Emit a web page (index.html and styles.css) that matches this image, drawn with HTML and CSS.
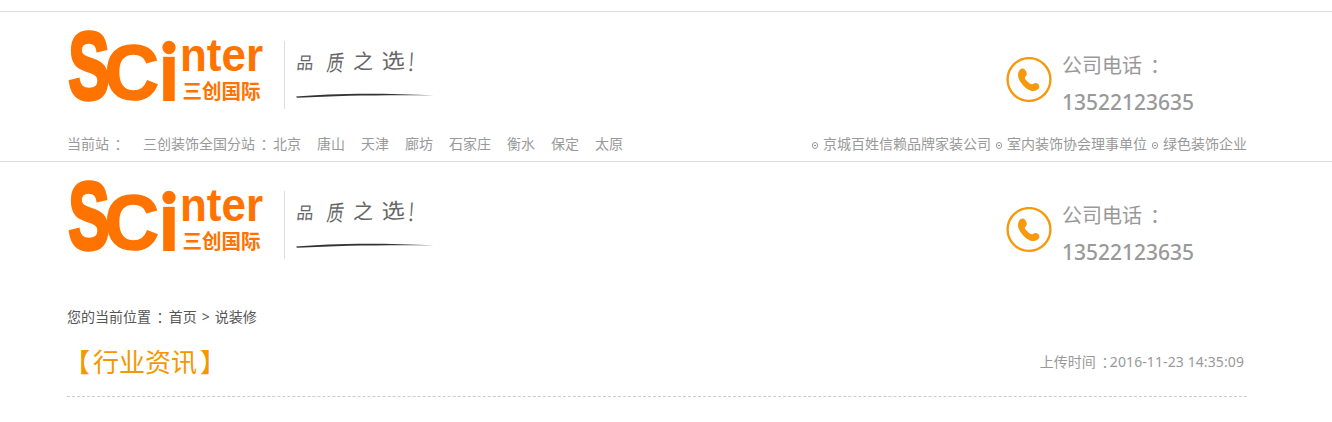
FILE: index.html
```html
<!DOCTYPE html>
<html lang="zh-CN">
<head>
<meta charset="utf-8">
<title>说装修</title>
<link rel="stylesheet" href="styles.css">
</head>
<body>
<header class="site-header">
  <div class="wrap masthead">
    <svg class="brand" width="380" height="100" viewBox="0 0 380 100">
      <g class="logo">
        <text class="logo-s" transform="translate(1.2 87) scale(.66 1.03)">S</text>
        <text class="logo-c" transform="translate(37.6 87.4) scale(1.02 1.06)">C</text>
        <text class="logo-i" transform="translate(90.3 89)">ı</text>
        <circle class="dot" cx="102" cy="35.5" r="7.4"/>
        <text class="logo-nter" x="113" y="59" textLength="83" lengthAdjust="spacingAndGlyphs">nter</text>
        <text class="logo-cn" x="115.5" y="86.5" textLength="78" lengthAdjust="spacingAndGlyphs">三创国际</text>
      </g>
      <path class="divider" d="M217.5 29v68"/>
      <g class="slogan">
        <text class="small" transform="translate(229 57) skewX(-6)">品</text>
        <text transform="translate(259 59) skewX(-8) scale(.8 1.05)">质</text>
        <text transform="translate(286 56.5) skewX(-4) scale(.95 1)">之</text>
        <text transform="translate(315 57) rotate(-3) scale(1.1 1)">选</text>
        <text class="mark" transform="translate(340 59) skewX(-4)">!</text>
      </g>
      <path class="stroke" d="M229 84.5c32-3 80-4 138-1.2-52-.4-94 .1-137 2.5z"/>
    </svg>
    <div class="phone">
      <svg class="phone-icon" width="46" height="46" viewBox="0 0 46 46"><circle cx="23" cy="22.5" r="21.4"/><path d="M13 14c1-2 3-3 5-2 2 1 4 5 2 7-2 2-1 3 1 5s4 4 6 3c2-2 5-1 6 1 1 2 0 4-2 5-5 3-11-1-15-6-4-5-5-9-3-13z"/></svg>
      <div class="phone-text">公司电话<span class="colon">：</span><br><span class="number">13522123635</span></div>
    </div>
  </div>
  <div class="wrap stations">
    <div class="cities"><span class="current">当前站<span class="colon">：</span></span><span class="all">三创装饰全国分站<span class="colon">：</span></span><a>北京</a><a>唐山</a><a>天津</a><a>廊坊</a><a>石家庄</a><a>衡水</a><a>保定</a><a>太原</a></div>
    <div class="honors"><i></i><span>京城百姓信赖品牌家装公司</span><i></i><span>室内装饰协会理事单位</span><i></i><span>绿色装饰企业</span></div>
  </div>
</header>
<header class="site-header second">
  <div class="wrap masthead">
    <svg class="brand" width="380" height="100" viewBox="0 0 380 100">
      <g class="logo">
        <text class="logo-s" transform="translate(1.2 87) scale(.66 1.03)">S</text>
        <text class="logo-c" transform="translate(37.6 87.4) scale(1.02 1.06)">C</text>
        <text class="logo-i" transform="translate(90.3 89)">ı</text>
        <circle class="dot" cx="102" cy="35.5" r="7.4"/>
        <text class="logo-nter" x="113" y="59" textLength="83" lengthAdjust="spacingAndGlyphs">nter</text>
        <text class="logo-cn" x="115.5" y="86.5" textLength="78" lengthAdjust="spacingAndGlyphs">三创国际</text>
      </g>
      <path class="divider" d="M217.5 29v68"/>
      <g class="slogan">
        <text class="small" transform="translate(229 57) skewX(-6)">品</text>
        <text transform="translate(259 59) skewX(-8) scale(.8 1.05)">质</text>
        <text transform="translate(286 56.5) skewX(-4) scale(.95 1)">之</text>
        <text transform="translate(315 57) rotate(-3) scale(1.1 1)">选</text>
        <text class="mark" transform="translate(340 59) skewX(-4)">!</text>
      </g>
      <path class="stroke" d="M229 84.5c32-3 80-4 138-1.2-52-.4-94 .1-137 2.5z"/>
    </svg>
    <div class="phone">
      <svg class="phone-icon" width="46" height="46" viewBox="0 0 46 46"><circle cx="23" cy="22.5" r="21.4"/><path d="M13 14c1-2 3-3 5-2 2 1 4 5 2 7-2 2-1 3 1 5s4 4 6 3c2-2 5-1 6 1 1 2 0 4-2 5-5 3-11-1-15-6-4-5-5-9-3-13z"/></svg>
      <div class="phone-text">公司电话<span class="colon">：</span><br><span class="number">13522123635</span></div>
    </div>
  </div>
</header>
<main class="wrap">
  <nav class="crumbs">您的当前位置<span class="colon">：</span> <a>首页</a><span class="sep">&gt;</span><a>说装修</a></nav>
  <div class="article-head">
    <h1><span class="open">【</span>行业资讯<span class="close">】</span></h1>
    <div class="time">上传时间<span class="colon">：</span><span class="stamp">2016-11-23 14:35:09</span></div>
  </div>
</main>
</body>
</html>
```
FILE: styles.css
```css
* { box-sizing: border-box; }
body {
  margin: 0;
  padding-top: 11px;
  background: #fff;
  color: #999;
  font: 14px/20px "Noto Sans", "Noto Sans CJK SC", sans-serif;
  overflow: hidden;
}
.wrap { width: 1180px; margin-left: 67px; }
.site-header { height: 150px; border-top: 1px solid #ddd; }
.second { height: 137px; }
.masthead { display: flex; justify-content: space-between; height: 122px; }
.brand { display: block; flex: none; overflow: visible; }
.logo { fill: #ff7300; }
.logo text { font-family: "Liberation Sans", Arial, sans-serif; font-weight: 700; }
.logo .logo-s { font-size: 94px; stroke: #ff7300; stroke-width: 3.5px; }
.logo .logo-c { font-size: 74px; stroke: #ff7300; stroke-width: 1.5px; }
.logo .logo-i { font-size: 84px; }
.dot { stroke: #fff; stroke-width: 1.5px; }
.logo .logo-nter { font-size: 46px; }
.logo .logo-cn { font-family: "Noto Sans CJK SC", sans-serif; font-size: 20px; }
.divider { stroke: #ddd; }
.slogan { fill: #666; font: 400 21px "Noto Sans CJK SC", sans-serif; }
.slogan .small { font-size: 17px; }
.slogan .mark { font-size: 25px; font-weight: 300; }
.stroke { fill: #333; }
.phone { display: flex; width: 241px; padding-top: 36px; }
.phone-icon { flex: none; margin-top: 9px; }
.phone-icon circle { fill: none; stroke: #f59a0c; stroke-width: 2.4; }
.phone-icon path { fill: #f59a0c; }
.phone-text { padding-left: 10px; font-size: 20px; line-height: 36px; }
.number { font-size: 21px; font-weight: 500; }
.colon { display: inline-block; width: 1em; text-indent: .4em; }
.stations { display: flex; justify-content: space-between; }
.cities { display: flex; }
.current { width: 76px; }
.all { width: 130px; }
.cities a { margin-right: 16px; }
.honors { display: flex; align-items: center; }
.honors i { width: 6px; height: 7px; margin: 2px 5px 0; border: 1px solid #999; border-radius: 3px; background: linear-gradient(#999, #999) center / 2px 1px no-repeat; }
.crumbs { padding-top: 9px; color: #555; }
.sep { margin: 0 5px; }
.article-head { display: flex; justify-content: space-between; height: 70px; border-bottom: 1px dashed #ccc; }
h1 { margin: 0; padding-top: 15px; color: #f39800; font-size: 26px; font-weight: 400; line-height: 40px; }
.open, .close { display: inline-block; }
.open { transform: translateX(-3px); }
.close { transform: translateX(3px); }
.time { padding: 25px 3px 0 0; }
.stamp { letter-spacing: .1px; }
```
